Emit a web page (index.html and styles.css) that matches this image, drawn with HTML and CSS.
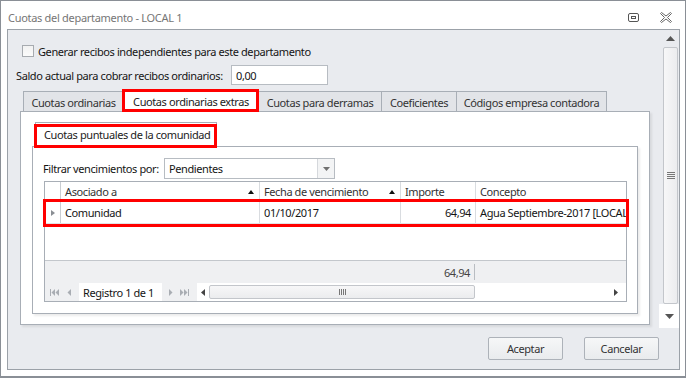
FILE: index.html
```html
<!DOCTYPE html>
<html lang="es">
<head>
<meta charset="utf-8">
<title>Cuotas del departamento - LOCAL 1</title>
<link rel="stylesheet" href="styles.css">
</head>
<body>
<div class="window">
  <div class="titlebar">
    <span class="title">Cuotas del departamento - LOCAL 1</span>
    <div class="title-ctrls">
      <svg class="ico-restore" width="11" height="9" viewBox="0 0 11 9"><rect x="0.5" y="0.5" width="10" height="8" rx="1.5" fill="none" stroke="#555" stroke-width="1"/><rect x="3.5" y="3.5" width="4" height="2" fill="none" stroke="#555" stroke-width="1"/></svg>
      <svg class="ico-close" width="12" height="11" viewBox="0 0 12 11"><polygon points="0.5,1.5 1.5,0.5 6,4 10.5,0.5 11.5,1.5 7.5,5.5 11.5,9.5 10.5,10.5 6,7 1.5,10.5 0.5,9.5 4.5,5.5" fill="#fff" stroke="#666" stroke-width="1" stroke-linejoin="miter"/></svg>
    </div>
  </div>
  <div class="client">
    <div class="scrollarea">
      <div class="content">
        <div class="check-row"><span class="checkbox"></span><span>Generar recibos independientes para este departamento</span></div>
        <div class="saldo-row"><span class="saldo-label">Saldo actual para cobrar recibos ordinarios:</span><div class="input">0,00</div></div>
        <div class="tabs">
          <div class="tab tab-1">Cuotas ordinarias</div>
          <div class="tab tab-2 active">Cuotas ordinarias extras</div>
          <div class="tab tab-3">Cuotas para derramas</div>
          <div class="tab tab-4">Coeficientes</div>
          <div class="tab tab-5">Códigos empresa contadora</div>
        </div>
        <div class="tabpage">
          <div class="group">
            <div class="group-head">Cuotas puntuales de la comunidad</div>
            <div class="group-body">
              <div class="filter-row">
                <span class="filter-label">Filtrar vencimientos por:</span>
                <div class="combo"><span class="combo-text">Pendientes</span><span class="combo-btn"><svg width="7" height="4" viewBox="0 0 7 4"><polygon points="0,0 7,0 3.5,4" fill="#707070"/></svg></span></div>
              </div>
              <div class="grid">
                <div class="g-head">
                  <div class="c c-ind"></div>
                  <div class="c c-a">Asociado a<span class="sort"></span></div>
                  <div class="c c-f">Fecha de vencimiento<span class="sort"></span></div>
                  <div class="c c-i">Importe</div>
                  <div class="c c-c">Concepto</div>
                </div>
                <div class="g-row">
                  <div class="c c-ind"><span class="ind-arrow"></span></div>
                  <div class="c c-a">Comunidad</div>
                  <div class="c c-f">01/10/2017</div>
                  <div class="c c-i num">64,94</div>
                  <div class="c c-c">Agua Septiembre-2017 [LOCAL 1]</div>
                </div>
                <div class="g-empty"></div>
                <div class="g-foot">
                  <div class="foot-sum">64,94</div>
                  <div class="foot-sep"></div>
                </div>
                <div class="g-nav">
                  <div class="nav-btns">
                    <svg width="9" height="7" viewBox="0 0 9 7"><rect x="0" y="0" width="1" height="7" fill="#a9adb3"/><polygon points="5,0 5,7 1.5,3.5" fill="#a9adb3"/><polygon points="9,0 9,7 5.5,3.5" fill="#a9adb3"/></svg>
                    <svg width="4" height="7" viewBox="0 0 4 7"><polygon points="4,0 4,7 0.5,3.5" fill="#a9adb3"/></svg>
                  </div>
                  <div class="nav-text">Registro 1 de 1</div>
                  <div class="nav-btns">
                    <svg width="4" height="7" viewBox="0 0 4 7"><polygon points="0,0 0,7 3.5,3.5" fill="#a9adb3"/></svg>
                    <svg width="9" height="7" viewBox="0 0 9 7"><polygon points="0,0 0,7 3.5,3.5" fill="#a9adb3"/><polygon points="4,0 4,7 7.5,3.5" fill="#a9adb3"/><rect x="8" y="0" width="1" height="7" fill="#a9adb3"/></svg>
                  </div>
                  <div class="hscroll">
                    <svg class="h-arrow" width="4" height="7" viewBox="0 0 4 7"><polygon points="4,0 4,7 0,3.5" fill="#444"/></svg>
                    <div class="h-track">
                      <div class="h-thumb"><span class="grip-v"></span></div>
                    </div>
                    <svg class="h-arrow" width="4" height="7" viewBox="0 0 4 7"><polygon points="0,0 0,7 4,3.5" fill="#444"/></svg>
                  </div>
                </div>
              </div>
            </div>
          </div>
        </div>
      </div>
      <div class="vscroll">
        <div class="v-btn"><svg width="9" height="5" viewBox="0 0 9 5"><polygon points="0,5 9,5 4.5,0" fill="#555"/></svg></div>
        <div class="v-thumb"><span class="grip-h"></span></div>
        <div class="v-btn v-btn-down"><svg width="9" height="5" viewBox="0 0 9 5"><polygon points="0,0 9,0 4.5,5" fill="#555"/></svg></div>
      </div>
    </div>
    <div class="buttons">
      <div class="btn">Aceptar</div>
      <div class="btn">Cancelar</div>
    </div>
  </div>
</div>
</body>
</html>
```

FILE: styles.css
```css
* { box-sizing: border-box; }
html, body { margin: 0; padding: 0; background: #fff; }
body {
  font-family: "Noto Sans", "Open Sans", sans-serif;
  font-size: 11px;
  letter-spacing: -0.4px;
  color: #151515;
}
.window {
  width: 686px;
  height: 378px;
  border: 1px solid #8a8f96;
  border-bottom-width: 2px;
  background: #fff;
  display: flex;
  flex-direction: column;
}
.titlebar {
  height: 28px;
  flex: none;
  display: flex;
  align-items: center;
  padding: 4px 0 0 7px;
}
.title {
  color: #767676;
  letter-spacing: -0.3px;
  flex: 1;
}
.title-ctrls {
  display: flex;
  align-items: center;
  gap: 21px;
  margin-right: 13px;
}
.client {
  flex: 1;
  margin: 0 5px 6px 6px;
  border: 1px solid #9ba1a8;
  background: #e9ebef;
  display: flex;
  flex-direction: column;
}
.scrollarea {
  height: 299px;
  flex: none;
  display: flex;
}
.content {
  flex: 1;
  padding: 14px 9px 0 8px;
}
.check-row {
  height: 14px;
  display: flex;
  align-items: center;
  padding-left: 6px;
  gap: 4px;
}
.checkbox {
  width: 12px;
  height: 12px;
  border: 1px solid #a7abb0;
  background: linear-gradient(#f2f2f2, #fbfbfb);
}
.saldo-row {
  margin-top: 7px;
  height: 20px;
  display: flex;
  align-items: center;
}
.saldo-label { width: 215px; white-space: nowrap; }
.input {
  width: 97px;
  height: 20px;
  border: 1px solid #b7bcc2;
  background: #fff;
  padding: 2px 0 0 4px;
}
.tabs {
  margin-top: 5px;
  margin-left: 7px;
  height: 21px;
  display: flex;
  align-items: flex-end;
}
.tab {
  height: 20px;
  border: 1px solid #a8aeb6;
  border-bottom: none;
  border-right: none;
  background: #e2e4e8;
  color: #333;
  display: flex;
  align-items: center;
  justify-content: center;
  padding-top: 1px;
  white-space: nowrap;
}
.tab-1 { width: 100px; }
.tab-2 { width: 135px; }
.tab-3 { width: 123px; }
.tab-4 { width: 75px; }
.tab-5 { width: 151px; border-right: 1px solid #a8aeb6; }
.tab.active {
  height: 21px;
  background: #fff;
  color: #222;
  position: relative;
  z-index: 1;
}
.tab.active::after {
  content: "";
  position: absolute;
  left: -2px;
  right: -1px;
  top: -2px;
  bottom: -1px;
  border: 3px solid #f00;
}
.tabpage {
  margin-left: 4px;
  width: 630px;
  height: 214px;
  border: 1px solid #a8aeb6;
  background: #fff;
  padding: 10px 11px 0 11px;
  box-shadow: 2px 2px 2px rgba(0,0,0,0.08);
}
.group { display: flex; flex-direction: column; }
.group-head {
  margin-left: 3px;
  width: 182px;
  height: 24px;
  border: 1px solid #a8aeb6;
  border-bottom: none;
  padding: 4px 0 0 8px;
  color: #222;
  white-space: nowrap;
  position: relative;
  z-index: 1;
}
.group-head::after {
  content: "";
  position: absolute;
  left: -2px;
  right: -1px;
  top: 1px;
  bottom: -2px;
  border: 3px solid #f00;
}
.group-body {
  height: 168px;
  border: 1px solid #a8aeb6;
  padding: 11px 10px 0 10px;
  box-shadow: 2px 2px 2px rgba(0,0,0,0.08);
}
.filter-row {
  height: 21px;
  display: flex;
  align-items: center;
}
.filter-label { width: 121px; white-space: nowrap; }
.combo {
  width: 171px;
  height: 21px;
  border: 1px solid #b7bcc2;
  background: #fff;
  display: flex;
}
.combo-text { flex: 1; padding: 2px 0 0 4px; }
.combo-btn {
  width: 17px;
  border-left: 1px solid #d5d8dc;
  background: #f3f4f5;
  display: flex;
  align-items: center;
  justify-content: center;
}
.grid {
  margin: 2px 0 0 1px;
  width: 583px;
  border: 1px solid #a8aeb6;
  display: flex;
  flex-direction: column;
  background: #fff;
}
.g-head, .g-row {
  display: grid;
  grid-template-columns: 16px 199px 141px 75px 150px;
}
.g-head { height: 20px; border-bottom: 1px solid #c9cdd2; }
.g-row {
  height: 22px;
  border-bottom: 1px solid #e1e3e6;
  position: relative;
}
.g-row::after {
  content: "";
  position: absolute;
  left: -2px;
  right: -3px;
  top: -3px;
  bottom: -4px;
  border: 3px solid #f00;
}
.c {
  border-right: 1px solid #d9dce0;
  padding: 0 4px;
  display: flex;
  align-items: center;
  white-space: nowrap;
  overflow: hidden;
}
.g-head .c { color: #333; }
.c-c { border-right: none; }
.c-ind { padding: 0; justify-content: center; border-right-color: #c9cdd2; }
.num { justify-content: flex-end; }
.sort {
  margin-left: auto;
  margin-right: 1px;
  width: 0; height: 0;
  border-left: 3.5px solid transparent;
  border-right: 3.5px solid transparent;
  border-bottom: 4px solid #111;
}
.ind-arrow {
  width: 0; height: 0;
  border-top: 3.5px solid transparent;
  border-bottom: 3.5px solid transparent;
  border-left: 4px solid #8a8e94;
}
.g-empty { height: 36px; }
.g-foot {
  height: 23px;
  border-top: 1px solid #c3c7cc;
  background: #eff0f2;
  display: flex;
  align-items: center;
}
.foot-sum {
  width: 425px;
  text-align: right;
  color: #444;
}
.foot-sep {
  margin-left: 4px;
  width: 1px;
  height: 16px;
  background: #b9bdc2;
}
.g-nav {
  height: 18px;
  background: #eff0f2;
  display: flex;
  align-items: center;
}
.nav-btns { display: flex; align-items: center; gap: 8px; padding: 0 8px 0 5px; }
.nav-text {
  background: #fff;
  height: 18px;
  width: 83px;
  display: flex;
  align-items: center;
  padding-left: 4px;
  white-space: nowrap;
}
.nav-text + .nav-btns { padding: 0 0 0 7px; gap: 7px; }
.hscroll {
  flex: 1;
  height: 18px;
  display: flex;
  align-items: center;
  background: #fff;
  margin-left: 8px;
  padding: 0 8px 0 4px;
}
.h-track { flex: 1; height: 14px; padding: 0 139px 0 4px; }
.h-thumb {
  height: 14px;
  border: 1px solid #c3c6cb;
  border-radius: 2px;
  background: linear-gradient(#f7f7f8, #ebecee);
  display: flex;
  align-items: center;
  justify-content: center;
}
.grip-v {
  width: 7px; height: 6px;
  background: repeating-linear-gradient(90deg, #777 0 1px, transparent 1px 2px);
}
.vscroll {
  width: 20px;
  display: flex;
  flex-direction: column;
  padding: 0 1px 0 4px;
}
.v-btn {
  height: 17px;
  display: flex;
  align-items: center;
  justify-content: center;
}
.v-thumb {
  height: 257px;
  border: 1px solid #c3c6cb;
  border-radius: 2px;
  background: linear-gradient(90deg, #f7f7f8, #ebecee);
  display: flex;
  align-items: center;
  justify-content: center;
}
.grip-h {
  width: 8px; height: 7px;
  background: repeating-linear-gradient(180deg, #777 0 1px, transparent 1px 2px);
}
.v-btn-down { height: 24px; background: #fff; margin: 0 -1px 0 -4px; }
.buttons {
  flex: 1;
  display: flex;
  justify-content: flex-end;
  gap: 21px;
  padding: 8px 20px 0 0;
}
.btn {
  width: 75px;
  height: 23px;
  border: 1px solid #adb2b9;
  border-radius: 2px;
  background: linear-gradient(#f6f7f8, #e9ebed);
  display: flex;
  align-items: center;
  justify-content: center;
  color: #333;
}
```
